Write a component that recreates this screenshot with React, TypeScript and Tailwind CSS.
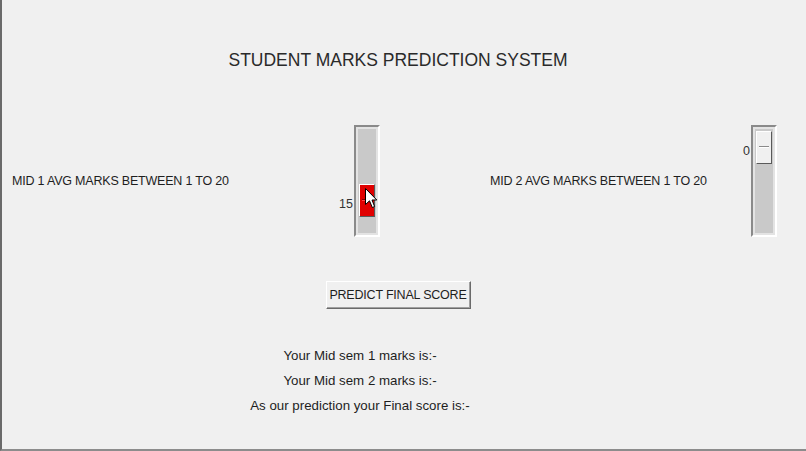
import React from 'react'

const font = { fontFamily: '"Liberation Sans", Arial, sans-serif' }

function Scale({ value, active }: { value: number; active?: boolean }) {
  // trough 112px tall, handle 33px, value 0..20
  const top = 4 + (value / 20) * 70
  return (
    <div className="relative w-[26px] h-[112px] border-t-2 border-l-2 border-[#8a8a8a] border-b-2 border-r-2 border-b-white border-r-white bg-[#e3e3e3]">
      <div className="absolute inset-[2px] bg-[#c9c9c9]" />
      <div className="absolute right-full mr-[3px] text-[12.5px] text-[#333] leading-none" style={{ top: top + 14 }}>{value}</div>
      <div
        className={`absolute left-[3px] w-[16px] h-[33px] border border-t-white border-l-white border-b-[#5a5a5a] border-r-[#5a5a5a] ${active ? 'bg-[#e00000]' : 'bg-[#f0f0f0]'}`}
        style={{ top }}
      >
        <div className={`mx-auto mt-[14px] w-[10px] h-[2px] border-t ${active ? 'border-[#800000] bg-[#ff4040]' : 'border-[#8a8a8a] bg-white'}`} />
      </div>
    </div>
  )
}

function Cursor() {
  return (
    <svg className="absolute left-[363px] top-[188px]" width="13" height="21" viewBox="0 0 13 21">
      <path d="M0.5 0.5 L0.5 16.5 L4.5 12.8 L7.3 19.5 L9.6 18.5 L7 12 L11.8 12 Z" fill="#fff" stroke="#000" strokeWidth="1" strokeLinejoin="round" />
    </svg>
  )
}

export default function App() {
  return (
    <div className="relative w-[806px] h-[451px] bg-[#f0f0f0] border-l-2 border-l-[#6a6a6a] border-b-2 border-b-[#8c8c8c] text-[#1e1e1e] overflow-hidden" style={font}>
      <div className="flex justify-center pr-[12px] pt-[49px] text-[17.5px] leading-[22px] text-[#2a2a2a]">STUDENT MARKS PREDICTION SYSTEM</div>
      <div className="flex items-center mt-[54px] pl-[10px]">
        <div className="w-[342px] text-[12.5px] tracking-[-0.2px]">MID 1 AVG MARKS BETWEEN 1 TO 20</div>
        <Scale value={15} active />
        <div className="ml-[110px] w-[261px] text-[12.5px] tracking-[-0.2px]">MID 2 AVG MARKS BETWEEN 1 TO 20</div>
        <Scale value={0} />
      </div>
      <div className="flex justify-center pr-[12px] mt-[44px]">
        <button className="h-[28px] w-[145px] text-[12.5px] tracking-[-0.2px] bg-[#f0f0f0] border border-t-white border-l-white border-b-[#6a6a6a] border-r-[#6a6a6a] shadow-[inset_-1px_-1px_0_#a0a0a0]">PREDICT FINAL SCORE</button>
      </div>
      <div className="flex flex-col items-center pr-[88px] mt-[34px] text-[13.3px] leading-[25px]">
        <div>Your Mid sem 1 marks is:-</div>
        <div>Your Mid sem 2 marks is:-</div>
        <div>As our prediction your Final score is:-</div>
      </div>
      <Cursor />
    </div>
  )
}
